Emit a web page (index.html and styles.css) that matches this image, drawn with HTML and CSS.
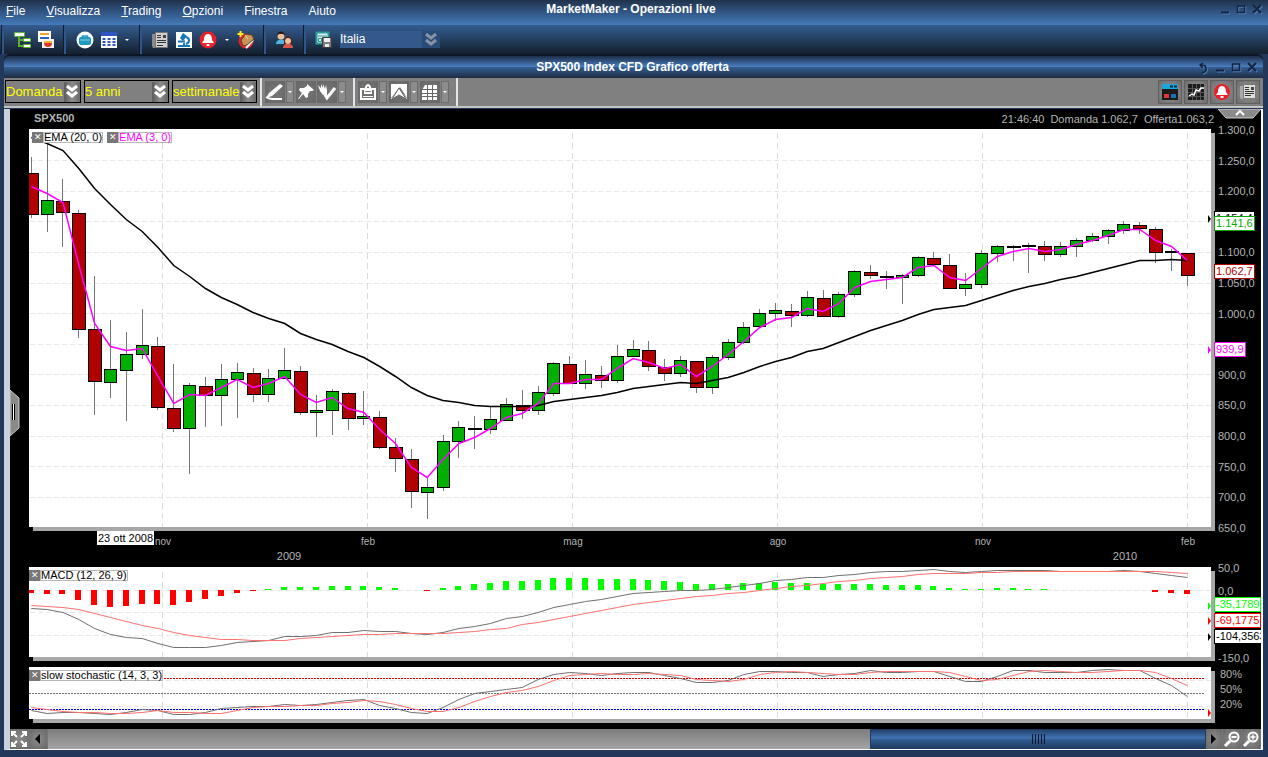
FILE: index.html
```html
<!DOCTYPE html>
<html lang="it">
<head>
  <meta charset="UTF-8">
  <meta name="viewport" content="width=device-width, initial-scale=1.0">
  <title>MarketMaker - Operazioni live</title>
  <link rel="stylesheet" href="styles.css">
</head>
<body>
  <!-- Main title bar -->
  <header class="titlebar">
    <nav class="menu">
      <a href="#"><u>F</u>ile</a>
      <a href="#"><u>V</u>isualizza</a>
      <a href="#"><u>T</u>rading</a>
      <a href="#"><u>O</u>pzioni</a>
      <a href="#">Finestra</a>
      <a href="#">Aiuto</a>
    </nav>
    <h1>MarketMaker - Operazioni live</h1>
    <div class="win-buttons">
      <button aria-label="Riduci"><svg width="10" height="10"><path d="M1 8.5h8" stroke-width="2"/></svg></button>
      <button aria-label="Ingrandisci"><svg width="10" height="10"><path d="M1.500 2h7v6.500h-7z" stroke-width="1.500"/></svg></button>
      <button aria-label="Chiudi"><svg width="10" height="10"><path d="M1 1l8 8M9 1l-8 8" stroke-width="2"/></svg></button>
    </div>
  </header>

  <!-- Main toolbar -->
  <div class="toolbar">
    <div class="group">
      <button aria-label="Albero prodotti"><svg width="18" height="18"><path d="M6 5v10h6M6 9h6" fill="none" stroke="#5fae2e" stroke-width="2"/><path d="M1.500 1.500h10v4h-10zM10.500 7.500h7v3h-7zM10.500 13.500h7v3h-7z" fill="#fff" stroke="#5fae2e"/></svg></button>
      <button aria-label="Ordini"><svg width="18" height="18"><path d="M1 0h13v11h-13z" fill="#fff"/><path d="M3 2h9v2h-9z" fill="#f5a623"/><path d="M3 6h9v2h-9z" fill="#2a62c0"/><path d="M5 8h12v9h-12z" fill="#f4f4f4"/><path d="M7 10h8v3h-8z" fill="#f7b733"/><path d="M7 12a4 4 0 0 0 8 0z" fill="#e3342a"/></svg></button>
    </div>
    <div class="group">
      <button aria-label="Conto"><svg width="20" height="20"><circle cx="10" cy="10" r="8.500" fill="#fff"/><rect x="4" y="7" width="12" height="8" rx="2" fill="#1c9ac0"/><path d="M7.500 8v-2h5v2" fill="none" stroke="#1c9ac0" stroke-width="1.500"/><path d="M5 10h10" stroke="#8fd4e8"/></svg></button>
      <button aria-label="Tabella"><svg width="16" height="18"><path d="M0 1h16v16h-16z" fill="#fff"/><path d="M0 1h16v4h-16z" fill="#2f56c0"/><path d="M1.500 8h3M6.500 8h3M11.500 8h3M1.500 11h3M6.500 11h3M11.500 11h3M1.500 14h3M6.500 14h3M11.500 14h3" stroke="#2f56c0" stroke-width="2"/></svg></button>
      <button class="caret" aria-label="Altre tabelle"></button>
    </div>
    <div class="group">
      <button aria-label="Notizie"><svg width="18" height="18"><path d="M1 3h3v14h-2l-1-2z" fill="#8a8a8a"/><path d="M4.500 1.500h12v15h-12z" fill="#d0d0d0" stroke="#777"/><path d="M6 4.500h4M6 6.500h4M6 9.500h9M6 11.500h9M6 14.500h6" stroke="#333"/><path d="M12 4h3v3h-3z" fill="#444"/></svg></button>
      <button aria-label="Analisi"><svg width="18" height="18"><path d="M1 1h16v16h-16z" fill="#fff"/><path d="M8 2l4 3-4 5-3-3z" fill="#1474b8"/><path d="M3 10.500h7M11 6c4 1 4 6 0 7M3 15h12M9 12v3" fill="none" stroke="#1474b8" stroke-width="2"/></svg></button>
      <button aria-label="Allarmi"><svg width="18" height="18"><circle cx="9" cy="9" r="8.500" fill="#e8202a"/><path d="M9 3c-3 0-4 3-4 6l-2 3h12l-2-3c0-3-1-6-4-6zM7.500 13h3v2h-3z" fill="#fff"/></svg></button>
      <button class="caret" aria-label="Altri allarmi"></button>
      <button aria-label="Nuovo allarme"><svg width="18" height="18"><circle cx="9" cy="10" r="7.500" fill="#e8202a"/><path d="M9 17l7-8" stroke="#fff" stroke-width="2"/><path d="M4 9l5-6 6 1 2 4-7 6-4 1z" fill="#c79455" stroke="#5c3a18"/><path d="M8 4l3 4" stroke="#f2d9b0"/><path d="M3.500 0v6M.5 3h6" stroke="#ffe81c" stroke-width="2"/></svg></button>
    </div>
    <div class="group">
      <button aria-label="Utenti"><svg width="20" height="18"><path d="M1 13c0-6 10-6 10 0z" fill="#52b4e4"/><circle cx="6" cy="5" r="3.500" fill="#eec29a"/><path d="M2 5c0-6 8-6 8 0l-2-2h-4z" fill="#2a1c14"/><path d="M8 17c0-6 10-6 10 0z" fill="#d9574a"/><path d="M9 13c-1-10 9-10 8 0z" fill="#5c1f1a"/><circle cx="13" cy="10" r="3" fill="#eec29a"/></svg></button>
    </div>
    <div class="group">
      <button aria-label="Salva layout"><svg width="18" height="18"><path d="M1.500 1.500h12v11h-12z" fill="#ddf0f0" stroke="#2a9c9c" stroke-width="2"/><path d="M3 5h9M3.500 7.500h3v3h-3z" stroke="#2a8c8c" fill="none"/><path d="M7.500 6.500h9v10h-9z" fill="#7c7c7c" stroke="#3a3a3a"/><path d="M9 7h6v4h-6zM10 13h4v3h-4z" fill="#eee"/></svg></button>
      <div class="layout-select">
        <select aria-label="Layout"><option>Italia</option></select>
        <svg width="18" height="17"><path d="M4 3l5 4 5-4M4 9l5 4 5-4"/></svg>
      </div>
    </div>
  </div>

  <!-- Chart window -->
  <main class="window">
    <div class="window-title">
      <h2>SPX500 Index CFD Grafico offerta</h2>
      <div class="win-buttons">
        <button aria-label="Sgancia"><svg width="10" height="12"><path d="M4 1l-3 2 3 3M1 3h2c5 0 6 7 0 8" stroke-width="1.500"/></svg></button>
        <button aria-label="Riduci"><svg width="10" height="10"><path d="M1 8.500h8" stroke-width="2"/></svg></button>
        <button aria-label="Ingrandisci"><svg width="10" height="10"><path d="M1.500 2h7v6.500h-7zM1 2h8" stroke-width="1.500"/></svg></button>
        <button aria-label="Chiudi"><svg width="10" height="10"><path d="M1 1l8 8M9 1l-8 8" stroke-width="2"/></svg></button>
      </div>
    </div>

    <div class="chart-tools">
      <div class="selects">
        <div class="select w-side">
          <select aria-label="Prezzo"><option>Domanda</option></select>
          <svg width="16" height="20"><path d="M3 4l5 4 5-4M3 10l5 4 5-4"/></svg>
        </div>
        <div class="select w-range">
          <select aria-label="Periodo"><option>5 anni</option></select>
          <svg width="16" height="20"><path d="M3 4l5 4 5-4M3 10l5 4 5-4"/></svg>
        </div>
        <div class="select w-range">
          <select aria-label="Intervallo"><option>settimanale</option></select>
          <svg width="16" height="20"><path d="M3 4l5 4 5-4M3 10l5 4 5-4"/></svg>
        </div>
      </div>
      <div class="tool-group">
        <button class="tool" aria-label="Linea"><svg width="20" height="20"><path d="M15 2l3 2-11 10-6 2 3-5z" fill="#fff"/><path d="M1 15c4 3 9 2 16 2" fill="none" stroke="#fff" stroke-width="2"/></svg></button>
        <button class="drop" aria-label="Tipi di linea"></button>
        <button class="tool" aria-label="Fissa"><svg width="20" height="20"><path d="M11 2l7 6-2 1-2 0-2 3 0 3-2 1-3-4-4 5-1 0 4-6-3-3 1-2h4l3-2z" fill="#fff"/></svg></button>
        <button class="tool" aria-label="Strumenti"><svg width="20" height="20"><path d="M1 3l2 6 3 4h4v-5l-1-5-1 4-2-5v4l-2-4v4z" fill="#fff"/><path d="M7 11l3 5 8-10" fill="none" stroke="#fff" stroke-width="3"/></svg></button>
        <button class="drop" aria-label="Altri strumenti"></button>
      </div>
      <div class="tool-group">
        <button class="tool" aria-label="Stampa"><svg width="20" height="20"><path d="M6 7h-3v10h14v-10h-3M8 7c-1-5 5-5 4 0" fill="none" stroke="#fff" stroke-width="2"/><path d="M6 6h8v6h-8zM5 14h10v1h-10z" fill="#fff"/><path d="M7 9.500h6" stroke="#777"/></svg></button>
        <button class="drop" aria-label="Opzioni stampa"></button>
        <button class="tool" aria-label="Tipo grafico"><svg width="20" height="20"><path d="M2 2h16v14l-7-11-9 11z" fill="#fff"/><path d="M2 17l8-9 8 9" fill="none" stroke="#fff" stroke-width="1"/><path d="M10 6l-7 11 7-4 7 4z" fill="#fff" stroke="#666"/></svg></button>
        <button class="drop" aria-label="Opzioni grafico"></button>
        <button class="tool" aria-label="Griglia"><svg width="20" height="20"><path d="M5 3h12v15h-15v-10z" fill="#fff"/><path d="M7.500 3v15M12.500 3v15M2 7.500h15M2 11.500h15M2 14.500h15" stroke="#666"/></svg></button>
        <button class="drop" aria-label="Opzioni griglia"></button>
      </div>
      <div class="tool-group last"></div>
      <div class="panel-buttons">
        <button aria-label="Scheda ordine"><svg width="18" height="18"><path d="M1 1h16v16h-16z" fill="#1b1b1b"/><path d="M1 1h16v5h-16z" fill="#1aa7e0"/><path d="M9 3.500h3M13 3.500h3" stroke="#123" stroke-width="2"/><path d="M3 11h5v4h-5z" fill="#e8332e"/><path d="M10 11h5v4h-5z" fill="#1474b8"/></svg></button>
        <button aria-label="Indicatori"><svg width="18" height="18"><path d="M1 1h16v16h-16z" fill="#1b1b1b"/><path d="M5.500 1v16M9.500 1v16M13.500 1v16M1 5.500h16M1 9.500h16M1 13.500h16" stroke="#555"/><path d="M2 13l3-2 2 1 2-5 3 1 2-3 3 0" fill="none" stroke="#fff" stroke-width="1.500"/></svg></button>
        <button aria-label="Allarmi grafico"><svg width="18" height="18"><circle cx="9" cy="9" r="8" fill="#e8202a"/><path d="M9 3c-3 0-4 3-4 6l-2 3h12l-2-3c0-3-1-6-4-6zM7.500 13h3v2h-3z" fill="#fff"/></svg></button>
        <button aria-label="Notizie indice"><svg width="18" height="18"><path d="M1 3h3v13h-2l-1-2z" fill="#aaa"/><path d="M4.500 1.500h12v14h-12z" fill="#ddd" stroke="#777"/><path d="M6 4.500h4M6 6.500h4M6 8.500h9M6 10.500h9M6 12.500h6" stroke="#333"/><path d="M12 4h3v3h-3z" fill="#444"/></svg></button>
      </div>
    </div>

    <section class="chart">
      <div class="chart-head">
        <strong>SPX500</strong>
        <span class="quotes"><span>21:46:40</span><span>Domanda 1.062,7</span><span>Offerta1.063,2</span></span>
      </div>

      <div class="row">
        <div class="plot">
          <svg id="price" viewBox="29 129 1182 398" height="398" preserveAspectRatio="none"></svg>
          <div class="legend">
            <span class="key"><button aria-label="Rimuovi EMA 20">✕</button><span>EMA (20, 0)</span></span>
            <span class="key pink"><button aria-label="Rimuovi EMA 3">✕</button><span>EMA (3, 0)</span></span>
          </div>
        </div>
        <div class="axis">
          <ul class="price-scale">
            <li>1.300,0</li><li>1.250,0</li><li>1.200,0</li><li></li><li>1.100,0</li><li>1.050,0</li><li>1.000,0</li>
            <li></li><li>900,0</li><li>850,0</li><li>800,0</li><li>750,0</li><li>700,0</li><li>650,0</li>
          </ul>
          <span class="tag black tag-ema20">1.154,4</span>
          <span class="tag green tag-high">1.141,6</span>
          <span class="tag darkred tag-last">1.062,7</span>
          <span class="tag magenta tag-ema3">939,9</span>
        </div>
      </div>

      <div class="time-axis" id="time">
        <span class="date-tag">23 ott 2008</span>
      </div>

      <div class="row">
        <div class="plot">
          <svg id="macd" viewBox="29 567 1182 90" height="90" preserveAspectRatio="none"></svg>
          <div class="legend flush">
            <span class="key"><button aria-label="Rimuovi MACD">✕</button><span>MACD (12, 26, 9)</span></span>
          </div>
        </div>
        <div class="axis">
          <ul class="macd-scale">
            <li>50,0</li><li>0,0</li><li></li><li></li><li>-150,0</li>
          </ul>
          <span class="tag lime tag-hist">-35,1789</span>
          <span class="tag red tag-signal">-69,1775</span>
          <span class="tag black tag-macd">-104,3563</span>
        </div>
      </div>

      <div class="row">
        <div class="plot">
          <svg id="stoch" viewBox="29 667 1182 52" height="52" preserveAspectRatio="none"></svg>
          <div class="legend flush">
            <span class="key"><button aria-label="Rimuovi stochastic">✕</button><span>slow stochastic (14, 3, 3)</span></span>
          </div>
        </div>
        <div class="axis">
          <ul class="stoch-scale">
            <li>80%</li><li>50%</li><li>20%</li>
          </ul>
        </div>
      </div>

      <button class="handle-left" aria-label="Apri pannello"><svg width="10" height="48"><path d="M0 1l9 8v30l-9 8z" fill="#8a8a8a" stroke="#ccc"/><path d="M2.500 15v16M4.500 15v16" stroke="#000"/><path d="M3.500 15v16" stroke="#fff"/></svg></button>
      <button class="handle-top" aria-label="Chiudi pannello"><svg width="43" height="11"><path d="M0 0h43l-8 9h-27z" fill="#8a8a8a" stroke="#ccc"/><path d="M18 6l4-4 4 4" fill="none" stroke="#fff" stroke-width="2"/></svg></button>
    </section>

    <div class="scroll">
      <button aria-label="Adatta"><svg width="18" height="18"><path d="M2 6V2h4M2 2l5 5M12 2h4v4M16 2l-5 5M2 12v4h4M2 16l5-5M16 12v4h-4M16 16l-5-5" fill="none" stroke="#fff" stroke-width="2"/></svg></button>
      <button aria-label="Indietro"><svg width="18" height="18"><path d="M11 4v10l-5-5z" fill="#000"/></svg></button>
      <div class="track"><div class="thumb"><svg width="15" height="10"><path d="M1.500 0v10M4.500 0v10M7.500 0v10M10.500 0v10M13.500 0v10" stroke="#0c1a2e"/></svg></div></div>
      <button aria-label="Avanti" class="narrow"><svg width="16" height="18"><path d="M5 4v10l5-5z" fill="#000"/></svg></button>
      <button aria-label="Riduci zoom"><svg width="18" height="18"><circle cx="11" cy="7" r="4.500" fill="none" stroke="#fff" stroke-width="2"/><path d="M8.500 7h5" stroke="#fff" stroke-width="2"/><path d="M7 11l-5 5" stroke="#fff" stroke-width="3"/></svg></button>
      <button aria-label="Aumenta zoom"><svg width="18" height="18"><circle cx="11" cy="7" r="4.500" fill="none" stroke="#fff" stroke-width="2"/><path d="M8.500 7h5M11 4.500v5" stroke="#fff" stroke-width="1.500"/><path d="M7 11l-5 5" stroke="#fff" stroke-width="3"/></svg></button>
    </div>
  </main>

  <script src="chart.js"></script>
</body>
</html>
```
FILE: styles.css
```css
* {
  box-sizing: border-box;
}

body {
  margin: 0;
  min-height: 100vh;
  font-family: "Liberation Sans", Arial, sans-serif;
  font-size: 12px;
  color: #fff;
  background-color: #22385a;
}

h1, h2 {
  margin: 0;
  font-size: 12px;
  line-height: 14px;
  font-weight: bold;
}

ul {
  list-style: none;
  margin: 0;
  padding: 0;
}

button {
  display: block;
  flex: none;
  padding: 0;
  border: 0;
  background: none;
  cursor: pointer;
}

svg {
  display: block;
}

/* Title bars */
.titlebar {
  display: grid;
  grid-template-columns: 1fr auto 1fr;
  height: 25px;
  padding: 2px 4px 0 6px;
  background: linear-gradient(#20324a, #315686 50%, #457ab8);
}

.menu {
  display: flex;
  gap: 21px;
  padding-top: 2px;
}

.menu a {
  color: #fff;
  line-height: 14px;
  text-decoration: none;
}

.titlebar h1 {
  padding-right: 8px;
}

.win-buttons {
  display: flex;
  justify-content: flex-end;
  align-items: flex-start;
  gap: 6px;
  padding: 2px 2px 0 0;
}

.win-buttons svg {
  fill: none;
  stroke: #14243c;
  filter: drop-shadow(1px 1px 0 #4a7dbe);
}

/* Main toolbar */
.toolbar {
  display: flex;
  height: 29px;
  padding-left: 2px;
  background: linear-gradient(#345c90, #14202e);
}

.group {
  display: flex;
  align-items: center;
  gap: 6px;
  padding: 0 9px;
  border-left: 2px solid #2f5688;
  box-shadow: -1px 0 0 #101c2c;
}

.caret::after {
  content: "";
  display: block;
  width: 0;
  margin: 0 2px;
  border: 2px solid transparent;
  border-top-color: #fff;
  border-bottom: 0;
}

.layout-select {
  display: flex;
  width: 100px;
  margin-left: 1px;
  background-color: #33588a;
}

.layout-select select {
  flex: 1;
  min-width: 0;
  padding: 0;
  border: 0;
  appearance: none;
  background: none;
  color: #fff;
  font: 12px/17px "Liberation Sans", Arial, sans-serif;
}

.layout-select svg {
  fill: none;
  stroke: #8793a2;
  stroke-width: 3;
  background-color: #294b78;
}

/* Chart window */
.window {
  margin: 2px 5px 0 4px;
  padding-bottom: 8px;
}

.window-title {
  position: relative;
  height: 22px;
  padding-top: 4px;
  text-align: center;
  border-radius: 6px 6px 0 0;
  box-shadow: 0 -2px 0 #0c1828;
  background: linear-gradient(#1c2e48, #4a7dbe 48%, #345c90 52%, #1d2d42);
}

.window-title h2 {
  padding-right: 2px;
}

.window-title .win-buttons {
  position: absolute;
  top: 4px;
  right: 4px;
}

.chart-tools {
  display: flex;
  align-items: stretch;
  height: 30px;
  background-color: #808080;
  border-bottom: 2px solid #c4c4c4;
}

.selects {
  display: flex;
  gap: 3px;
  padding: 2px 3px 3px 1px;
}

.select {
  display: flex;
  align-items: center;
  border: 1px solid #000;
}

.w-side {
  width: 76px;
}

.w-range {
  width: 85px;
}

.select select {
  flex: 1;
  min-width: 0;
  padding: 0;
  border: 0;
  appearance: none;
  background: none;
  color: #ff0;
  font: 13px/20px "Liberation Sans", Arial, sans-serif;
}

.select svg {
  flex: none;
  fill: none;
  stroke: #fff;
  stroke-width: 3;
  background: linear-gradient(90deg, #5c5c5c, #8c8c8c, #6a6a6a);
}

.tool-group {
  display: flex;
  align-items: center;
  gap: 1px;
  padding: 0 6px 1px 3px;
  border-left: 2px solid #dfe5ea;
}

.tool-group.last {
  padding: 0;
}

.tool {
  height: 22px;
  background: radial-gradient(#777, #666);
}

.drop {
  width: 8px;
  height: 22px;
  margin-right: 1px;
  border: 1px solid #6c6c6c;
  background-color: #8c8c8c;
}

.drop::after {
  content: "";
  display: block;
  width: 0;
  margin: auto;
  border: 2px solid transparent;
  border-top-color: #fff;
  border-bottom: 0;
}

.panel-buttons {
  display: flex;
  align-items: center;
  gap: 2px;
  margin-left: auto;
  padding-right: 3px;
}

.panel-buttons button {
  padding: 2px;
  border: 1px solid #606060;
  background: radial-gradient(#999, #6c6c6c);
}

/* Chart area */
.chart {
  position: relative;
  margin-top: 1px;
  padding: 0 0 6px 19px;
  border: 1px solid #9aa7b4;
  border-width: 0 2px 0 6px;
  border-color: #fff #fff #fff #c8d2dc;
  background-color: #000;
  color: #b4b4b4;
  font-size: 11px;
  line-height: 14px;
  overflow: hidden;
}

.chart-head {
  display: flex;
  justify-content: space-between;
  height: 20px;
  padding: 2px 47px 0 5px;
}

.quotes {
  display: flex;
  gap: 6px;
  padding-top: 1px;
}

.row {
  display: flex;
  margin-bottom: 6px;
  padding-bottom: 4px;
}

.row:last-of-type {
  margin-bottom: 0;
}

.plot {
  position: relative;
  flex: 1;
  background-color: #fff;
  box-shadow: 4px 4px 0 #a8a8a8;
}

.plot svg {
  width: 100%;
}

.axis {
  position: relative;
  width: 50px;
  height: 0;
  padding-left: 7px;
}

.axis ul {
  display: flex;
  flex-direction: column;
  justify-content: space-between;
}

.axis li {
  height: 14px;
}

.price-scale {
  height: 412px;
  margin-top: -6px;
}

.macd-scale {
  height: 104px;
  margin-top: -6px;
}

.stoch-scale {
  height: 44px;
  padding-left: 2px;
}

/* Value tags lying over the scales */
.tag {
  position: absolute;
  left: 3px;
  padding: 0 1px;
  border: 1px solid currentColor;
  background-color: #fff;
  line-height: 13px;
}

.black { color: #000; }
.green { color: #00a800; }
.darkred { color: #b00000; }
.magenta { color: #f0f; }
.lime { color: #0f0; }
.red { color: #f00; }

.tag-ema20 { top: 82px; }
.tag-high { top: 87px; }
.tag-last { top: 135px; }
.tag-ema3 { top: 213px; }
.tag-hist { top: 30px; }
.tag-signal { top: 46px; }
.tag-macd { top: 62px; }

.legend {
  position: absolute;
  top: 3px;
  left: 3px;
  display: flex;
  gap: 4px;
  color: #000;
}

.legend.flush {
  left: 0;
}

.key {
  display: flex;
}

.key button {
  width: 11px;
  height: 11px;
  background-color: #777;
  color: #fff;
  font-size: 9px;
  line-height: 11px;
}

.key span {
  height: 11px;
  border: 1px solid #b8b8b8;
  background-color: #fff;
  line-height: 9px;
}

.key.pink {
  color: #f0f;
}

.time-axis {
  position: relative;
  height: 36px;
  margin: -6px 50px 0 0;
  font-size: 10px;
}

.time-axis .month,
.time-axis .year {
  position: absolute;
  top: 4px;
  transform: translateX(-50%);
}

.time-axis .year {
  top: 18px;
  font-size: 11px;
}

.date-tag {
  position: absolute;
  left: 68px;
  z-index: 1;
  padding: 0 1px;
  background-color: #fff;
  color: #000;
  font-size: 11px;
}

/* Panel handles */
.handle-left {
  position: absolute;
  left: 0;
  top: 280px;
}

.handle-top {
  position: absolute;
  right: 0;
  top: 0;
}

/* Scroll bar */
.scroll {
  display: flex;
  height: 21px;
  border: 1px solid #fff;
  border-width: 0 2px 1px 6px;
  border-left-color: #c8d2dc;
  background-color: #777;
}

.scroll button {
  width: 18px;
  margin-right: 1px;
  background: radial-gradient(#8c8c8c, #666);
}

.scroll .narrow {
  width: 16px;
}

.track {
  flex: 1;
  background: linear-gradient(#7c7c7c, #a4a4a4);
}

.thumb {
  display: flex;
  align-items: center;
  justify-content: center;
  width: 29%;
  height: 20px;
  margin-left: auto;
  border: 1px solid #1f3a60;
  background: linear-gradient(#24426c, #4274b4 45%, #315a90 55%, #1e3a62);
}

/* Chart drawing */
.grid-h { stroke: #e8e8e8; stroke-dasharray: 5 3; }
.grid-v { stroke: #dcdcdc; stroke-dasharray: 6 4; }
.wick { stroke: #777; }
.up { fill: #00b000; stroke: #000; }
.down { fill: #b00000; stroke: #000; }
.line { fill: none; }
.ema20 { stroke: #000; stroke-width: 1.5; }
.ema3 { stroke: #f0f; stroke-width: 1.5; }
.fast { stroke: #707070; }
.slow { stroke: #ff7070; }
.level-hi { stroke: #e00000; stroke-dasharray: 2 1; }
.level-mid { stroke: #707070; stroke-dasharray: 2 1; }
.level-lo { stroke: #0000f0; stroke-dasharray: 2 1; }
```
FILE: chart.js
```js
// SPX500 weekly: [direction, body top, body bottom, high, low]
const candles = [
  ['d',173,215,157,218],['u',200,215,144,232],['d',201,213,179,247],['d',213,330,210,338],['d',329,382,276,415],
  ['u',369,383,320,398],['u',354,371,332,421],['u',345,355,309,359],['d',346,408,337,410],['d',408,429,364,432],
  ['u',385,429,383,474],['d',386,396,377,427],['u',379,396,364,426],['u',372,380,363,418],['d',373,395,368,402],
  ['u',378,395,369,402],['u',370,379,348,379],['d',371,413,366,415],['u',410,413,395,437],['u',391,411,389,435],
  ['d',393,419,392,430],['u',416,419,391,425],['d',417,448,411,449],['d',447,459,438,472],['d',459,492,449,508],
  ['u',487,493,477,519],['u',441,488,435,491],['u',427,442,421,458],['d',428,430,416,449],['u',419,430,406,434],
  ['u',404,421,398,421],['d',405,411,390,419],['u',392,411,386,415],['u',363,394,362,396],['d',364,384,356,384],
  ['u',374,384,360,389],['d',375,381,366,388],['u',356,381,345,383],['u',349,357,340,357],['d',350,367,341,371],
  ['d',367,374,359,381],['u',360,374,356,377],['d',361,388,361,393],['u',357,388,355,394],['u',342,358,339,360],
  ['u',327,343,322,344],['u',313,327,309,328],['u',310,314,303,321],['d',311,316,304,327],['u',297,316,291,317],
  ['d',298,317,290,317],['u',294,317,292,318],['u',271,295,270,297],['d',272,276,265,279],['d',276,278,271,289],
  ['u',275,278,274,304],['u',257,276,256,277],['d',258,265,252,265],['d',265,289,254,289],['u',284,289,273,296],
  ['u',253,285,250,288],['u',246,254,245,262],['d',246,248,245,261],['d',245,247,243,273],['d',246,255,241,261],
  ['u',246,255,242,257],['u',240,247,238,257],['u',236,241,233,242],['u',230,237,229,244],['u',224,231,221,234],
  ['d',225,229,222,234],['d',229,253,227,263],['d',251,253,249,271],['d',253,276,253,286]
];

const ema20 = [137,143,150,168,188,204,219,231,247,265,276,288,297,304,312,318,323,333,339,344,351,357,366,376,387,
  395,400,402,405,406,406,406,405,401,399,397,395,392,388,386,384,382,383,380,377,372,366,361,357,351,348,342,336,
  330,325,320,314,309,307,305,300,295,290,286,283,279,276,272,268,264,260,260,259,260];

const ema3 = [186,193,202,264,323,346,350,348,376,403,394,395,387,379,387,383,376,394,402,397,408,412,429,443,467,
  477,459,443,437,428,417,413,403,383,383,379,379,368,358,362,368,364,376,366,354,341,327,319,317,308,311,303,287,
  281,279,277,267,265,277,280,268,256,251,248,251,249,244,240,235,229,229,240,246,260];

const hist = [-3,-4,-4,-10,-15,-17,-16,-14,-14,-15,-12,-9,-6,-3,-1,1,3,3,3,4,4,4,3,2,0,-1,2,4,6,7,9,9,10,12,12,12,
  11,11,11,10,9,8,6,6,6,7,7,8,7,7,6,6,6,6,5,5,5,4,2,1,1,2,2,1,1,0,0,0,0,0,0,-2,-3,-4];

const macd = [608,609,612,619,628,634,637,638,643,647,647,647,645,642,641,640,636,636,635,632,632,630,631,631,633,
  634,632,628,626,623,618,616,612,607,604,601,599,596,593,592,591,590,590,589,587,585,583,580,579,577,577,575,574,
  572,571,571,570,569,571,572,571,570,570,570,570,571,571,571,571,570,571,573,575,577];

const signal = [605,606,607,609,613,617,621,625,628,632,635,637,639,639,640,640,640,638,637,636,635,634,634,633,633,
  633,633,632,631,629,628,624,622,619,616,613,610,607,604,602,600,598,596,595,593,592,590,588,586,585,583,581,580,
  578,577,576,574,573,573,573,572,572,571,571,571,571,571,571,571,571,571,571,572,573];

const stochK = [710,713,712,712,713,714,712,709,710,714,714,712,708,707,706,706,704,705,704,702,700,699,705,708,712,
  713,707,699,693,691,689,687,679,674,672,673,675,673,672,672,675,678,682,682,680,674,671,671,672,672,676,674,673,
  670,672,672,671,671,676,681,681,676,670,670,672,672,672,670,669,670,670,678,685,696];

const stochD = [707,709,711,712,712,713,713,712,710,712,712,713,713,710,707,706,706,705,705,703,702,700,701,704,708,
  711,711,707,701,696,692,690,686,680,675,674,673,674,674,673,674,675,679,680,681,679,674,672,671,672,673,674,674,
  672,671,671,671,671,672,676,680,679,675,671,670,671,672,672,671,670,670,672,678,685];

const xs = i => 31.3 + i * 15.836;
const months = [[162, 'nov'], [367, 'feb'], [572, 'mag'], [777, 'ago'], [982, 'nov'], [1187, 'feb']];
const years = [[288, '2009'], [1124, '2010']];

const line = (cls, x1, y1, x2, y2) => `<line class="${cls}" x1="${x1}" y1="${y1}" x2="${x2}" y2="${y2}"/>`;

const path = (cls, values, off = 0.5) =>
  `<polyline class="line ${cls}" points="${values.map((y, i) => xs(i).toFixed(1) + ',' + (y + off)).join(' ')}"/>`;

const marker = (y, color) => `<path d="M1208 ${y - 4}l3 4-3 4z" fill="${color}"/>`;

function grid(rows, top, bottom) {
  return rows.map(y => line('grid-h', 30, y + 0.5, 1211, y + 0.5)).join('') +
    months.map(m => line('grid-v', m[0] + 0.5, top, m[0] + 0.5, bottom)).join('');
}

function drawPrice() {
  let out = grid([160, 191, 221, 252, 283, 313, 344, 374, 405, 436, 466, 497], 133, 527);
  candles.forEach(([dir, top, bottom, high, low], i) => {
    const cx = Math.floor(xs(i)) + 0.5;
    const w = dir === 'u' ? 12 : 13;
    out += line('wick', cx, high, cx, low);
    out += `<rect class="${dir === 'u' ? 'up' : 'down'}" x="${cx - 6}" y="${top + 0.5}" width="${w}" height="${bottom - top - 1}"/>`;
  });
  out += path('ema20', ema20) + path('ema3', ema3) + marker(219, '#000') + marker(350, '#f0f');
  document.getElementById('price').innerHTML = out;
}

function drawMacd() {
  let out = grid([590, 612, 635], 572, 657);
  hist.forEach((h, i) => {
    const x = Math.floor(xs(i)) - 3;
    out += `<rect x="${x}" y="${h > 0 ? 590 - h : 590}" width="6" height="${Math.abs(h)}" fill="${h > 0 ? '#0f0' : '#f00'}"/>`;
  });
  out += path('fast', macd) + path('slow', signal);
  out += marker(606, '#0f0') + marker(621, '#f00') + marker(637, '#000');
  document.getElementById('macd').innerHTML = out;
}

function drawStoch() {
  document.getElementById('stoch').innerHTML = grid([680, 706], 672, 719) +
    line('level-hi', 29, 678.5, 1204, 678.5) +
    line('level-mid', 29, 693.5, 1204, 693.5) +
    line('level-lo', 29, 709.5, 1204, 709.5) +
    path('fast', stochK) + path('slow', stochD) + marker(713, '#f00');
}

function drawTime() {
  const label = (cls, [x, text]) => `<span class="${cls}" style="left: ${(x - 28) / 11.82}%">${text}</span>`;
  document.getElementById('time').innerHTML +=
    months.map(m => label('month', m)).join('') + years.map(y => label('year', y)).join('');
}

drawPrice();
drawMacd();
drawStoch();
drawTime();
```
